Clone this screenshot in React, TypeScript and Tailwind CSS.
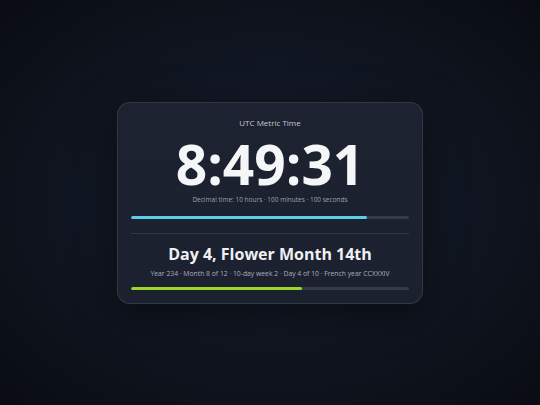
export default function App() {
  const timeProgress = 0.84931;
  const dateProgress = 0.614;

  return (
    <div
      className="flex h-screen w-full items-center justify-center bg-[radial-gradient(ellipse_at_center,#1a2130_0%,#111723_45%,#090c12_100%)]"
      style={{ fontFamily: '"Open Sans", "Noto Sans", sans-serif' }}
    >
      <div className="w-[306px] rounded-[13px] border border-white/10 bg-[linear-gradient(180deg,#1c2230_0%,#1b212e_100%)] px-[13px] pt-[14px] pb-[13px] shadow-[0_10px_40px_rgba(0,0,0,0.5)]">
        <div className="text-center text-[8px] leading-[11px] text-[#c3c8d2]">UTC Metric Time</div>
        <div className="mt-[8px] text-center text-[55px] font-bold leading-[56px] text-[#f5f6f8]">
          8:49:31
        </div>
        <div className="mt-[3px] text-center text-[6.5px] leading-[10px] text-[#9aa1ad]">
          Decimal time: 10 hours · 100 minutes · 100 seconds
        </div>
        <div className="mt-[11px] h-[3px] w-full overflow-hidden rounded-full bg-[#353b47]">
          <div className="h-full rounded-full bg-[#5bcde9]" style={{ width: `${timeProgress * 100}%` }} />
        </div>
        <div className="mt-[14px] h-px w-full bg-white/10" />
        <div className="mt-[10px] text-center text-[16px] font-bold leading-[20px] text-[#eef0f3]">
          Day 4, Flower Month 14th
        </div>
        <div className="mt-[5px] text-center text-[6.8px] leading-[10px] text-[#aab0ba]">
          Year 234 · Month 8 of 12 · 10-day week 2 · Day 4 of 10 · French year CCXXXIV
        </div>
        <div className="mt-[8px] h-[3px] w-full overflow-hidden rounded-full bg-[#353b47]">
          <div className="h-full rounded-full bg-[#9bd62c]" style={{ width: `${dateProgress * 100}%` }} />
        </div>
      </div>
    </div>
  );
}
